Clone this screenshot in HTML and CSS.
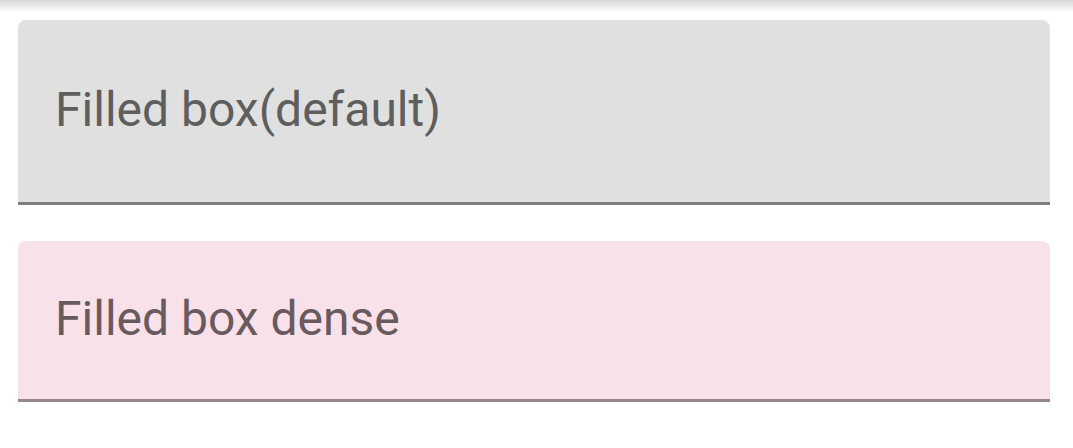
FILE: index.html
```html
<!DOCTYPE html>
<html lang="en">
<head>
    <meta charset="UTF-8">
    <meta name="viewport" content="width=device-width, initial-scale=1.0">
    <title>Filled boxes</title>
    <link rel="stylesheet" href="styles.css">
</head>
<body>
    <div class="toolbar-shadow"></div>
    <main>
        <div class="filled-box">
            <span class="label">Filled box(default)</span>
        </div>
        <div class="filled-box dense">
            <span class="label">Filled box dense</span>
        </div>
    </main>
</body>
</html>
```

FILE: styles.css
```css
body {
    font-family: Roboto, "Noto Sans", Arial, sans-serif;
    margin: 0;
    padding: 0;
    background-color: #ffffff;
}
.toolbar-shadow {
    height: 12px;
    background: linear-gradient(to bottom, #d6d6d6, #ffffff);
}
main {
    display: flex;
    flex-direction: column;
    gap: 36px;
    padding: 8px 23px 0 18px;
}
.filled-box {
    display: flex;
    align-items: center;
    height: 185px;
    padding: 0 37px;
    box-sizing: border-box;
    background-color: #e0e0e0;
    border-radius: 8px 8px 0 0;
    border-bottom: 3px solid #7f7f7f;
}
.filled-box .label {
    font-size: 48px;
    color: #5e5e5e;
    margin-top: -4px;
}
.filled-box.dense {
    height: 161px;
    background-color: #f8e1e8;
    border-bottom-color: #95878b;
}
.filled-box.dense .label {
    color: #695a60;
}
```
